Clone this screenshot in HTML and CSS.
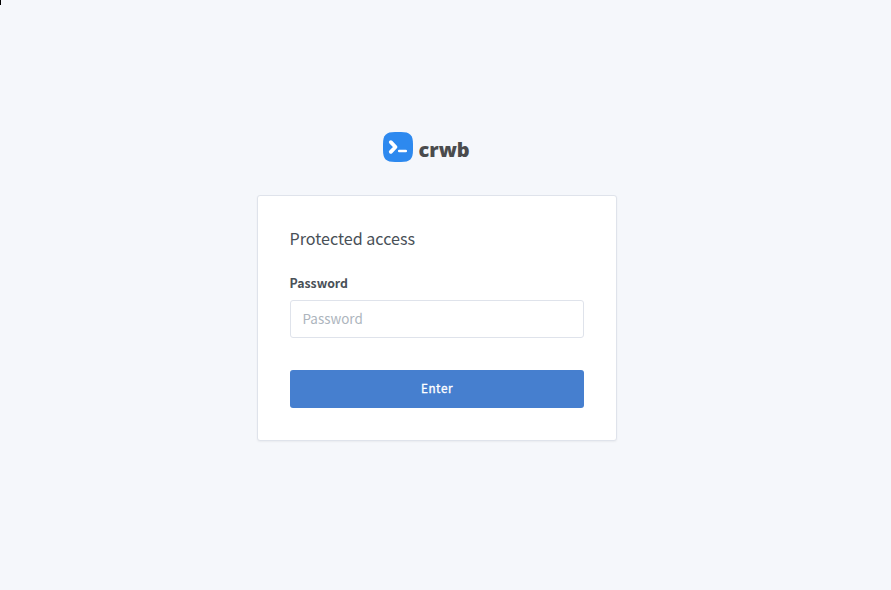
FILE: index.html
```html
<!DOCTYPE html>
<html lang="en">
<head>
<meta charset="utf-8">
<title>Protected access</title>
<link rel="stylesheet" href="styles.css">
</head>
<body>
<span class="caret"></span>
<main class="login">
  <div class="brand">
    <svg class="brand-icon" viewBox="0 0 30 30" aria-hidden="true">
      <path d="M0 12C0 3 3 0 12 0h6c9 0 12 3 12 12v6c0 9-3 12-12 12h-6C3 30 0 27 0 18Z" fill="#2d89ef"/>
      <path d="M7.8 10.2L12.5 15l-4.7 4.8" fill="none" stroke="#fff" stroke-width="3.8" stroke-linecap="round" stroke-linejoin="round"/>
      <path d="M16.2 19.1h6.6" stroke="#fff" stroke-width="2.5" stroke-linecap="round"/>
    </svg>
    <span class="brand-name">crwb</span>
  </div>
  <form class="card">
    <h1 class="card-title">Protected access</h1>
    <label class="label" for="password">Password</label>
    <input class="input" id="password" type="password" placeholder="Password">
    <button class="button" type="button">Enter</button>
  </form>
</main>
</body>
</html>
```
FILE: styles.css
```css
* { box-sizing: border-box; }
body {
  margin: 0;
  height: 590px;
  overflow: hidden;
  background: #f5f7fb;
  color: #495057;
  font-family: "Noto Sans CJK SC", "Open Sans", sans-serif;
}
.caret {
  position: absolute;
  top: 0;
  left: 0;
  width: 1px;
  height: 5px;
  background: #000;
}
.login {
  width: 360px;
  margin-left: 257px;
  padding-top: 132px;
}
.brand {
  display: flex;
  height: 63px;
  padding-left: 126px;
}
.brand-icon { width: 30px; height: 30px; }
.brand-name {
  margin: 3px 0 0 5.5px;
  font: 800 20px/30px "Open Sans", sans-serif;
  color: #4a4b4d;
}
.card {
  height: 246px;
  padding: 31px 32px 32px;
  background: #fff;
  border: 1px solid #dfe3eb;
  border-radius: 3px;
  box-shadow: 0 1px 2px rgba(0, 0, 0, .05);
}
.card-title {
  margin: 0 0 24px -.5px;
  font-size: 16.1px;
  line-height: 22px;
  font-weight: 400;
}
.label {
  display: block;
  height: 27px;
  margin-left: -.5px;
  font-size: 12.3px;
  line-height: 20px;
  font-weight: 700;
}
.input {
  display: block;
  width: 100%;
  height: 38px;
  margin-bottom: 32px;
  padding: 0 11.5px 2px;
  font: 13.45px/24px "Noto Sans CJK SC", sans-serif;
  border: 1px solid #dfe3eb;
  border-radius: 3px;
  background: #fff;
}
.input::placeholder { color: #adb5bd; opacity: 1; }
.button {
  display: block;
  width: 100%;
  height: 38px;
  padding: 0 0 2px;
  border: 0;
  border-radius: 3px;
  background: #467fcf;
  color: #fff;
  font: 400 11.7px/20px "Noto Sans CJK SC", sans-serif;
  letter-spacing: .55px;
  -webkit-text-stroke: .3px currentColor;
}
```
